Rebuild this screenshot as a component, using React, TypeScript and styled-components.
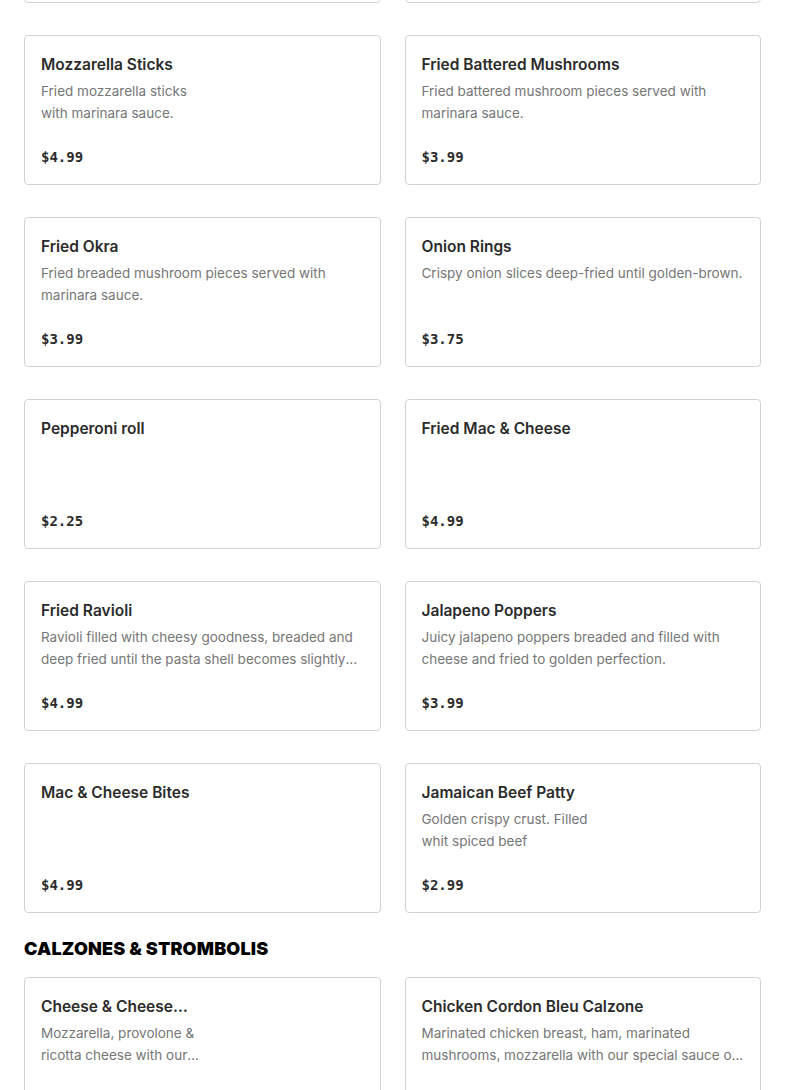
import { useLayoutEffect, useRef } from 'react'
import styled, { createGlobalStyle } from 'styled-components'

type Item = {
  name: string
  description?: string
  price: string
}

type Section = {
  title: string
  items: Item[]
}

const sections: Section[] = [
  {
    title: 'APPETIZERS',
    items: [
      { name: 'Garlic Knots', description: 'Fresh baked knots brushed with\ngarlic butter.', price: '$3.49' },
      { name: 'Breadsticks', description: 'Served with marinara sauce.', price: '$3.99' },
      { name: 'Mozzarella Sticks', description: 'Fried mozzarella sticks\nwith marinara sauce.', price: '$4.99' },
      {
        name: 'Fried Battered Mushrooms',
        description: 'Fried battered mushroom pieces served with marinara sauce.',
        price: '$3.99',
      },
      {
        name: 'Fried Okra',
        description: 'Fried breaded mushroom pieces served with marinara sauce.',
        price: '$3.99',
      },
      { name: 'Onion Rings', description: 'Crispy onion slices deep-fried until golden-brown.', price: '$3.75' },
      { name: 'Pepperoni roll', price: '$2.25' },
      { name: 'Fried Mac & Cheese', price: '$4.99' },
      {
        name: 'Fried Ravioli',
        description:
          'Ravioli filled with cheesy goodness, breaded and deep fried until the pasta shell becomes slightly crispy and golden.',
        price: '$4.99',
      },
      {
        name: 'Jalapeno Poppers',
        description: 'Juicy jalapeno poppers breaded and filled with cheese and fried to golden perfection.',
        price: '$3.99',
      },
      { name: 'Mac & Cheese Bites', price: '$4.99' },
      { name: 'Jamaican Beef Patty', description: 'Golden crispy crust. Filled\nwhit spiced beef', price: '$2.99' },
    ],
  },
  {
    title: 'CALZONES & STROMBOLIS',
    items: [
      {
        name: 'Cheese & Cheese\nCalzone',
        description: 'Mozzarella, provolone &\nricotta cheese with our\nspecial sauce.',
        price: '$10.99',
      },
      {
        name: 'Chicken Cordon Bleu Calzone',
        description:
          'Marinated chicken breast, ham, marinated mushrooms, mozzarella with our special sauce on the side.',
        price: '$13.99',
      },
      { name: 'Meat Lovers Calzone', description: 'Pepperoni, sausage, ham and bacon.', price: '$12.99' },
      { name: 'Steak Stromboli', description: 'Steak, onions, peppers and mozzarella.', price: '$12.99' },
    ],
  },
]

export default function App() {
  const anchor = useRef<HTMLDivElement>(null)

  // the reference is scrolled so the Mozzarella Sticks card sits 35px from the top
  useLayoutEffect(() => {
    const el = anchor.current
    if (!el) return
    const top = el.getBoundingClientRect().top + window.scrollY
    window.scrollTo(0, top - 35)
  }, [])

  return (
    <>
      <GlobalStyle />
      <Page>
        {sections.map((section) => (
          <MenuSection key={section.title}>
            <SectionTitle>{section.title}</SectionTitle>
            <Grid>
              {section.items.map((item) => (
                <Card key={item.name} ref={item.name === 'Mozzarella Sticks' ? anchor : undefined}>
                  <ItemName>{item.name}</ItemName>
                  {item.description && <ItemDescription>{item.description}</ItemDescription>}
                  <Price>{item.price}</Price>
                </Card>
              ))}
            </Grid>
          </MenuSection>
        ))}
      </Page>
    </>
  )
}

// ─── Styles ───────────────────────────────────────

const GlobalStyle = createGlobalStyle`
  * {
    box-sizing: border-box;
  }

  body {
    margin: 0;
    background: #ffffff;
    font-family: Inter, 'Liberation Sans', sans-serif;
    color: #2b2b2b;
  }
`

const Page = styled.main`
  padding: 24px 24px 40px;
  display: flex;
  flex-direction: column;
  gap: 24px;
`

const MenuSection = styled.section`
  display: flex;
  flex-direction: column;
  gap: 16px;
`

const SectionTitle = styled.h2`
  margin: 0;
  font-family: Inter, 'Liberation Sans', sans-serif;
  font-size: 18px;
  line-height: 24px;
  font-weight: 900;
  color: #000000;
  letter-spacing: 0.01em;
`

const Grid = styled.div`
  display: grid;
  grid-template-columns: 1fr 1fr;
  column-gap: 24px;
  row-gap: 32px;
`

const Card = styled.div`
  height: 150px;
  padding: 16px;
  border: 1px solid #d3d3d3;
  border-radius: 4px;
  background: #ffffff;
  display: flex;
  flex-direction: column;
  min-width: 0;
`

const ItemName = styled.h3`
  margin: 0;
  padding-top: 1px;
  font-size: 15.5px;
  line-height: 24px;
  font-weight: 600;
  color: #2b2b2b;
  white-space: pre-line;
  display: -webkit-box;
  -webkit-line-clamp: 1;
  -webkit-box-orient: vertical;
  overflow: hidden;
`

const ItemDescription = styled.p`
  margin: 3px 0 0;
  font-size: 13.5px;
  line-height: 22px;
  color: #767676;
  white-space: pre-line;
  display: -webkit-box;
  -webkit-line-clamp: 2;
  -webkit-box-orient: vertical;
  overflow: hidden;
`

const Price = styled.span`
  margin-top: auto;
  margin-bottom: 1px;
  font-family: 'DejaVu Sans Mono', 'Liberation Mono', monospace;
  font-size: 14px;
  line-height: 20px;
  font-weight: 700;
  color: #2b2b2b;
`
